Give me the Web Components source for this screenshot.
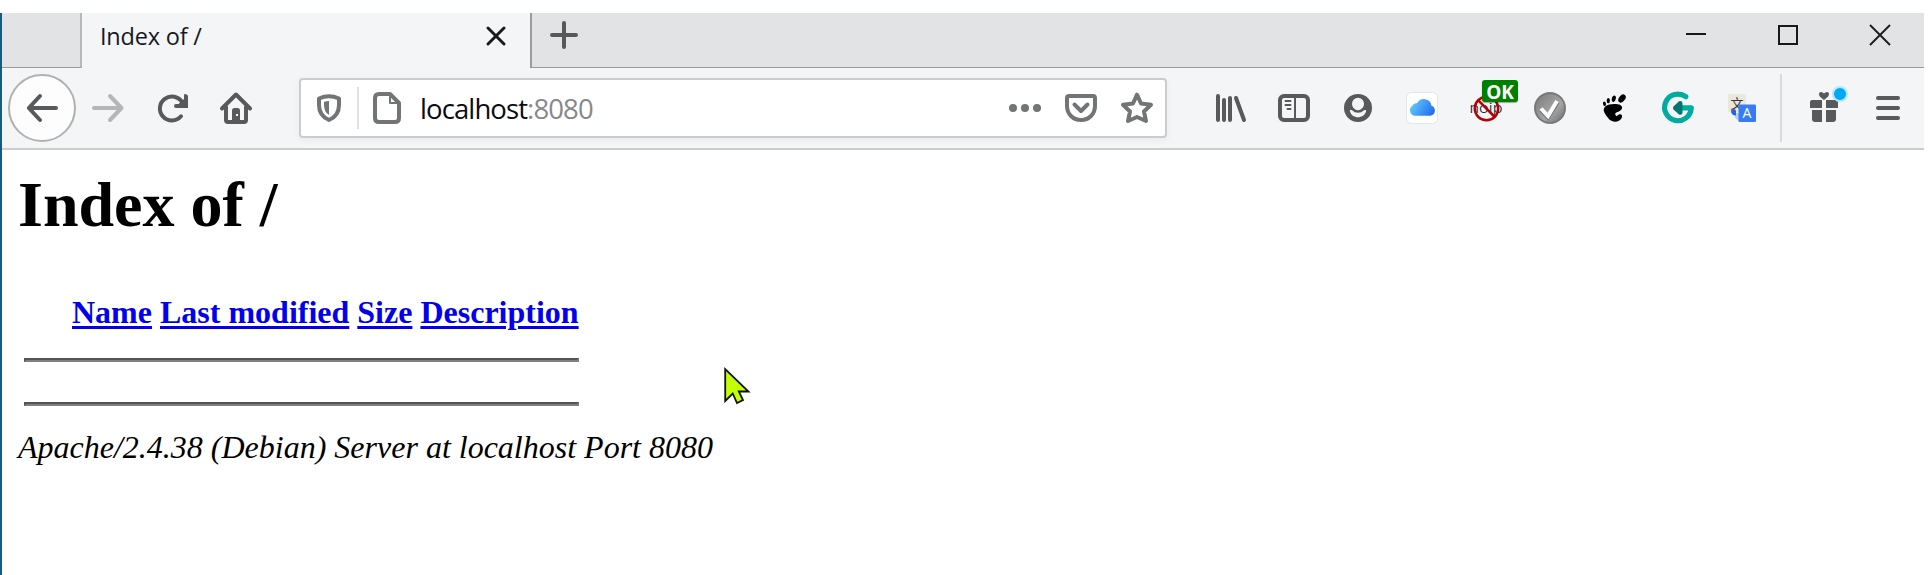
<!DOCTYPE html>
<html lang="en">
<head>
<meta charset="utf-8">
<title>Index of /</title>
<style>
html,body{margin:0;background:#fff;height:575px;overflow:hidden}
</style>
</head>
<body>
<browser-window>
  <tab-strip slot="tabs"><browser-tab>Index of /</browser-tab></tab-strip>
  <nav-toolbar slot="toolbar"></nav-toolbar>
  <directory-index></directory-index>
</browser-window>
<mouse-pointer></mouse-pointer>
<script>
const S = 'fill="none" stroke="currentColor" stroke-linecap="round" stroke-linejoin="round"';
const ICONS = {
  back: `<path ${S} stroke-width="4" d="M30 16H4M14 4L2.800 16L14 28"/>`,
  forward: `<path ${S} stroke-width="4" d="M2 16H28M18 4L29.500 16L18 28"/>`,
  reload: `<path ${S} stroke-width="4" d="M25 24.300A12 12 0 1 1 26.300 10.500"/><path fill="currentColor" d="M28.500 2Q32 2 32 4.500V16H20Q18 16 18 14Q18 12 20 12H22.500L28 7V4Q28 2 28.500 2Z"/>`,
  home: `<path ${S} stroke-width="4" d="M2 16.500L16 2.500L30 16.500M6 15V28Q6 30 8 30H24Q26 30 26 28V15"/><path fill="currentColor" fill-rule="evenodd" d="M12 30V18.500Q12 16 14.500 16H17.500Q20 16 20 18.500V30ZM16 22h2v2h-2z"/>`,
  shield: `<path ${S} stroke-width="4" d="M6 6.500Q16 2 26 6.500V13C26 21 22 25.500 16 28C10 25.500 6 21 6 13Z"/><path fill="currentColor" d="M16 9V23Q11 20 11 13V10Q13 9 16 9Z"/>`,
  page: `<path ${S} stroke-width="4" d="M8 2H19L28 11V26Q28 30 24 30H8Q4 30 4 26V6Q4 2 8 2Z"/><path ${S} stroke-width="2" d="M19 2V11H28"/>`,
  dots: `<g fill="currentColor"><circle cx="4" cy="16" r="4"/><circle cx="16" cy="16" r="4"/><circle cx="28" cy="16" r="4"/></g>`,
  pocket: `<path ${S} stroke-width="4" d="M4 4H28Q30 4 30 6V14C30 22 24 28 16 28S2 22 2 14V6Q2 4 4 4Z"/><path ${S} stroke-width="4" d="M9.500 12.500L16 19L22.500 12.500"/>`,
  star: `<path ${S} stroke-width="4" d="M16 2.700L20 11.500L30 12.700L23 19.500L25 29L16 25L7 29L9 19.500L2 12.700L12 11.500Z"/>`,
  library: `<path ${S} stroke-width="4" d="M4 4V28M10 8V28M16 6V28M22 6L30 28"/>`,
  sidebar: `<rect x="2" y="4" width="28" height="24" rx="4" ${S} stroke-width="4"/><path ${S} stroke-width="2" d="M17 4V28M7.500 9H12.500M7.500 13H12.500M9.500 17H12.500"/>`,
  account: `<g transform="translate(-1)"><circle cx="17" cy="16" r="14" fill="currentColor"/><path fill="#f4f5f7" d="M17 5.800a6 6 0 0 1 6 6C23 15.500 20 18.200 17 18.200S11 15.500 11 11.800A6 6 0 0 1 17 5.800ZM9 18.200Q9.500 17.500 11 18.200Q13.500 20.700 17 20.700T23 18.200Q25.500 17.500 25.200 18.800C23.500 27.500 10.500 27.500 8.800 18.800Z"/></g>`,
  cloud: `<defs><linearGradient id="c" x1="0" x2="1" y1=".3" y2=".7"><stop stop-color="#63ccfa"/><stop offset="1" stop-color="#236df2"/></linearGradient></defs><rect x=".5" y=".5" width="31" height="31" rx="5" fill="#fff" stroke="#e4e5e7"/><path fill="url(#c)" d="M8.500 23.700A5.500 5.500 0 0 1 6.300 13.800A4.300 4.300 0 0 1 11 11.300A7.700 7.700 0 0 1 25.500 13.700A5.200 5.200 0 0 1 24.500 23.700Z"/>`,
  noip: `<text x="-.5" y="20.500" font-family="Inter" font-size="13.500" font-weight="300" fill="#252527" textLength="33" lengthAdjust="spacingAndGlyphs">noip</text><g fill="none" stroke="#b50000" stroke-width="2.500"><circle cx="16.500" cy="16.500" r="11.700"/><path d="M8.300 8.300L24.800 25"/></g>`,
  check: `<defs><linearGradient id="g" x1="0" x2="1" y2="1"><stop stop-color="#777"/><stop offset=".6" stop-color="#a5a5a5"/><stop offset="1" stop-color="#666"/></linearGradient></defs><circle cx="16" cy="16" r="16" fill="url(#g)"/><circle cx="16" cy="16" r="14.800" fill="none" stroke="#777" stroke-width="1.500"/><path d="M7 17.500L14 25L23.500 10" fill="none" stroke="#777" stroke-width="4.500"/><path d="M7 16.500L14 24L23 9" fill="none" stroke="#fff" stroke-width="4"/>`,
  gnome: `<g fill="#000"><path d="M16.500 12C23 11.500 26 15 23 18C20.500 20.500 16 20 17.500 23C19 25.500 19 23 21.500 22.300C24 22 24.700 24 23.700 26C21.500 30.500 14 31 10.500 26.500C7 22 3.500 18 7.500 14.300Q10.500 12 16.500 12Z"/><ellipse cx="24" cy="6.500" rx="3" ry="4.600" transform="rotate(38 24 6.500)"/><ellipse cx="15.800" cy="6.700" rx="2" ry="3.200" transform="rotate(12 15.800 6.700)"/><ellipse cx="10.300" cy="8.600" rx="1.600" ry="2.700"/><ellipse cx="6.500" cy="11.700" rx="1.500" ry="2.300" transform="rotate(-10 6.500 11.700)"/></g>`,
  gmark: `<path d="M23.800 4.700A13.300 13.300 0 1 0 29.200 15.800H18" fill="none" stroke="#00aba0" stroke-width="5.200" stroke-linecap="round" stroke-linejoin="round"/><path d="M17 9.200Q20.500 8.500 20.500 11.500V20.500Q20.500 23.500 17 22.500L11.500 17.500Q10.500 16 11.500 14.500Z" fill="#00776f"/>`,
  translate: `<rect x="2" y="2" width="18" height="18" rx="1.500" fill="#ebe7dc"/><text x="4.600" y="15.500" font-family="Noto Sans CJK SC" font-size="13" fill="#37383a">文</text><path fill="#b8d1f7" d="M8 21H13V27H16V24L21 29.500H14Q8 27 8 21Z"/><path fill="#2368d8" d="M5 18.500Q9 15.500 10 19V23.500Q5 23.500 5 18.500Z"/><rect x="12.500" y="12.500" width="17.500" height="17.500" rx="1.200" fill="#387cf2"/><text x="16.500" y="26" font-family="Open Sans" font-size="14" fill="#fff">A</text>`,
  gift: `<g fill="currentColor"><path d="M4 8H14V16H2V10Q2 8 4 8ZM18 8H28Q30 8 30 10V16H18ZM4 18H14V30H7Q4 30 4 27ZM18 18H28V27Q28 30 25 30H18Z"/><path d="M16 8C12 5 11 4 11 2Q11 0 13 0Q15 0 16 1.500Q17 0 19 0Q21 0 21 2C21 4 20 5 16 8Z"/></g>`,
  menu: `<path ${S} stroke-width="4" d="M6 6H26M6 16H26M6 26H26"/>`,
  tabclose: `<path ${S} stroke-width="3" d="M8 8L24 24M24 8L8 24"/>`,
  plus: `<path ${S} stroke-width="4" d="M16 4V28M4 16H28"/>`,
  minimize: `<path d="M6 15H26" stroke="currentColor" stroke-width="2"/>`,
  maximize: `<rect x="7" y="7" width="18" height="18" fill="none" stroke="currentColor" stroke-width="2"/>`,
  winclose: `<path d="M6 6L26 26M26 6L6 26" stroke="currentColor" stroke-width="1.800"/>`
};
function define(name, html, ready) {
  customElements.define(name, class extends HTMLElement {
    constructor() {
      super();
      this.attachShadow({mode: 'open'}).innerHTML = html;
    }
    connectedCallback() { if (ready) ready(this); }
  });
}
define('ui-icon', `<style>:host{display:block;width:32px;height:32px;flex:none}svg{display:block;overflow:visible}</style><svg width="32" height="32" viewBox="0 0 32 32"></svg>`,
  el => { el.shadowRoot.querySelector('svg').innerHTML = ICONS[el.getAttribute('name')]; });

define('browser-window', `<style>
:host{display:block;box-sizing:border-box;height:575px;padding-top:13px}
main{display:flex;flex-direction:column;height:562px;box-sizing:border-box;border-left:2px solid #185a80}
header{margin-right:4px}
</style><main><header><slot name="tabs"></slot><slot name="toolbar"></slot></header><slot></slot></main>`);

define('tab-strip', `<style>
:host{display:flex;height:55px;background:#f4f5f7;color:#18191b}
.lead,.rest{box-sizing:border-box;background:#e2e3e5;border-bottom:1px solid #98999b}
.lead{width:80px;border-right:2px solid #b7b8ba}
.rest{flex:1;display:flex;border-left:2px solid #9a9b9d;padding:6px 28px 0 16px}
.plus{color:#57585a}
.controls{display:flex;gap:60px;margin-left:auto}
</style><div class="lead"></div><slot></slot><div class="rest"><ui-icon class="plus" name="plus"></ui-icon><div class="controls"><ui-icon name="minimize"></ui-icon><ui-icon name="maximize"></ui-icon><ui-icon name="winclose"></ui-icon></div></div>`);

define('browser-tab', `<style>
:host{display:flex;box-sizing:border-box;width:448px;height:55px;padding:7px 18px 0 18px;justify-content:space-between;background:#f4f5f7}
.title{font:23.500px/32px "Open Sans","Noto Sans",sans-serif;letter-spacing:-.200px}
</style><span class="title"><slot></slot></span><ui-icon name="tabclose"></ui-icon>`);

define('address-bar', `<style>
:host{display:flex;box-sizing:border-box;width:868px;height:60px;align-items:center;background:#fff;border:2px solid #ccc;border-radius:4px;box-shadow:0 2px 8px #0000000d;padding:0 12px 0 12px;color:#737475}
.sep{width:2px;height:42px;background:#e1e1e2;margin:0 12px 0 12px}
.url{margin-left:17px;font:27.500px/36px "Open Sans","Noto Sans",sans-serif;letter-spacing:-.900px;color:#86888b;padding-top:2px}
b{font-weight:400;color:#0c0c0d}
.actions{display:flex;gap:24px;margin-left:auto}
</style><ui-icon name="shield"></ui-icon><div class="sep"></div><ui-icon name="page"></ui-icon><span class="url"><b>localhost</b>:8080</span><div class="actions"><ui-icon name="dots"></ui-icon><ui-icon name="pocket"></ui-icon><ui-icon name="star"></ui-icon></div>`);

define('badged-icon', `<style>
:host{display:block;position:relative;width:32px;height:32px}
.ok{position:absolute;left:12px;top:-12px;width:36px;height:22px;border-radius:3px;background:#008000;box-shadow:0 1px 1px #0005;color:#fff;font:700 19px/25px "Open Sans","Noto Sans",sans-serif;text-align:center}
.dot{position:absolute;left:24px;top:-6px;width:12px;height:12px;border:2px solid #b4e7fb;border-radius:50%;background:#00a8f5}
</style><slot></slot><span></span>`, el => {
  const b = el.shadowRoot.querySelector('span'), t = el.getAttribute('badge');
  b.className = t ? 'ok' : 'dot'; b.textContent = t || '';
});

define('nav-toolbar', `<style>
:host{display:flex;box-sizing:border-box;height:82px;align-items:center;background:#f4f5f7;border-bottom:2px solid #ccc;padding:0 20px 0 6px;color:#58595b}
.back{display:flex;box-sizing:border-box;width:68px;height:68px;align-items:center;justify-content:center;border:2px solid #b1b1b2;border-radius:50%;background:#fdfdfd}
.nav{display:flex;gap:32px;margin:0 47px 0 16px}
.fwd{color:#b5b6b8}
.tools{display:flex;gap:32px;margin-left:47px}
.sep{width:2px;height:68px;background:#d9dadb;margin-left:auto}
.end{display:flex;gap:32px;margin-left:26px}
</style><div class="back"><ui-icon name="back"></ui-icon></div>
<div class="nav"><ui-icon class="fwd" name="forward"></ui-icon><ui-icon name="reload"></ui-icon><ui-icon name="home"></ui-icon></div>
<address-bar></address-bar>
<div class="tools"><ui-icon name="library"></ui-icon><ui-icon name="sidebar"></ui-icon><ui-icon name="account"></ui-icon><ui-icon name="cloud"></ui-icon><badged-icon badge="OK"><ui-icon name="noip"></ui-icon></badged-icon><ui-icon name="check"></ui-icon><ui-icon name="gnome"></ui-icon><ui-icon name="gmark"></ui-icon><ui-icon name="translate"></ui-icon></div>
<div class="sep"></div>
<div class="end"><badged-icon><ui-icon name="gift"></ui-icon></badged-icon><ui-icon name="menu"></ui-icon></div>`);

define('directory-index', `<style>
:host{display:block;padding:19px 16px 0;font:32px/36px "Liberation Serif","Times New Roman",serif;color:#000}
h1{font-size:64px;line-height:72px;margin:0 0 53px}
.table{width:555px;margin-left:6px}
.head{display:flex;gap:8px;padding-left:48px;font-weight:700}
a{color:#00e;text-decoration:underline;text-decoration-thickness:3px;text-underline-offset:3px}
hr{box-sizing:border-box;height:4px;margin:0;border:2px solid;border-color:#555 #808080 #808080 #555}
.head+hr{margin-top:28px}
hr+hr{margin-top:40px}
address{margin-top:23px;font-style:italic}
</style><h1>Index of /</h1>
<div class="table"><div class="head"><a>Name</a><a>Last modified</a><a>Size</a><a>Description</a></div><hr><hr></div>
<address>Apache/2.4.38 (Debian) Server at localhost Port 8080</address>`);

define('mouse-pointer', `<style>:host{display:block;position:absolute;left:724px;top:366px}svg{display:block}</style>
<svg width="28" height="40" viewBox="0 0 28 40"><path d="M1.200 3V35L8.700 27.500L13 37L19 34L14.800 25.500H24.500Z" fill="#c3ff00" stroke="#111" stroke-width="1.800"/></svg>`);
</script>
</body>
</html>
